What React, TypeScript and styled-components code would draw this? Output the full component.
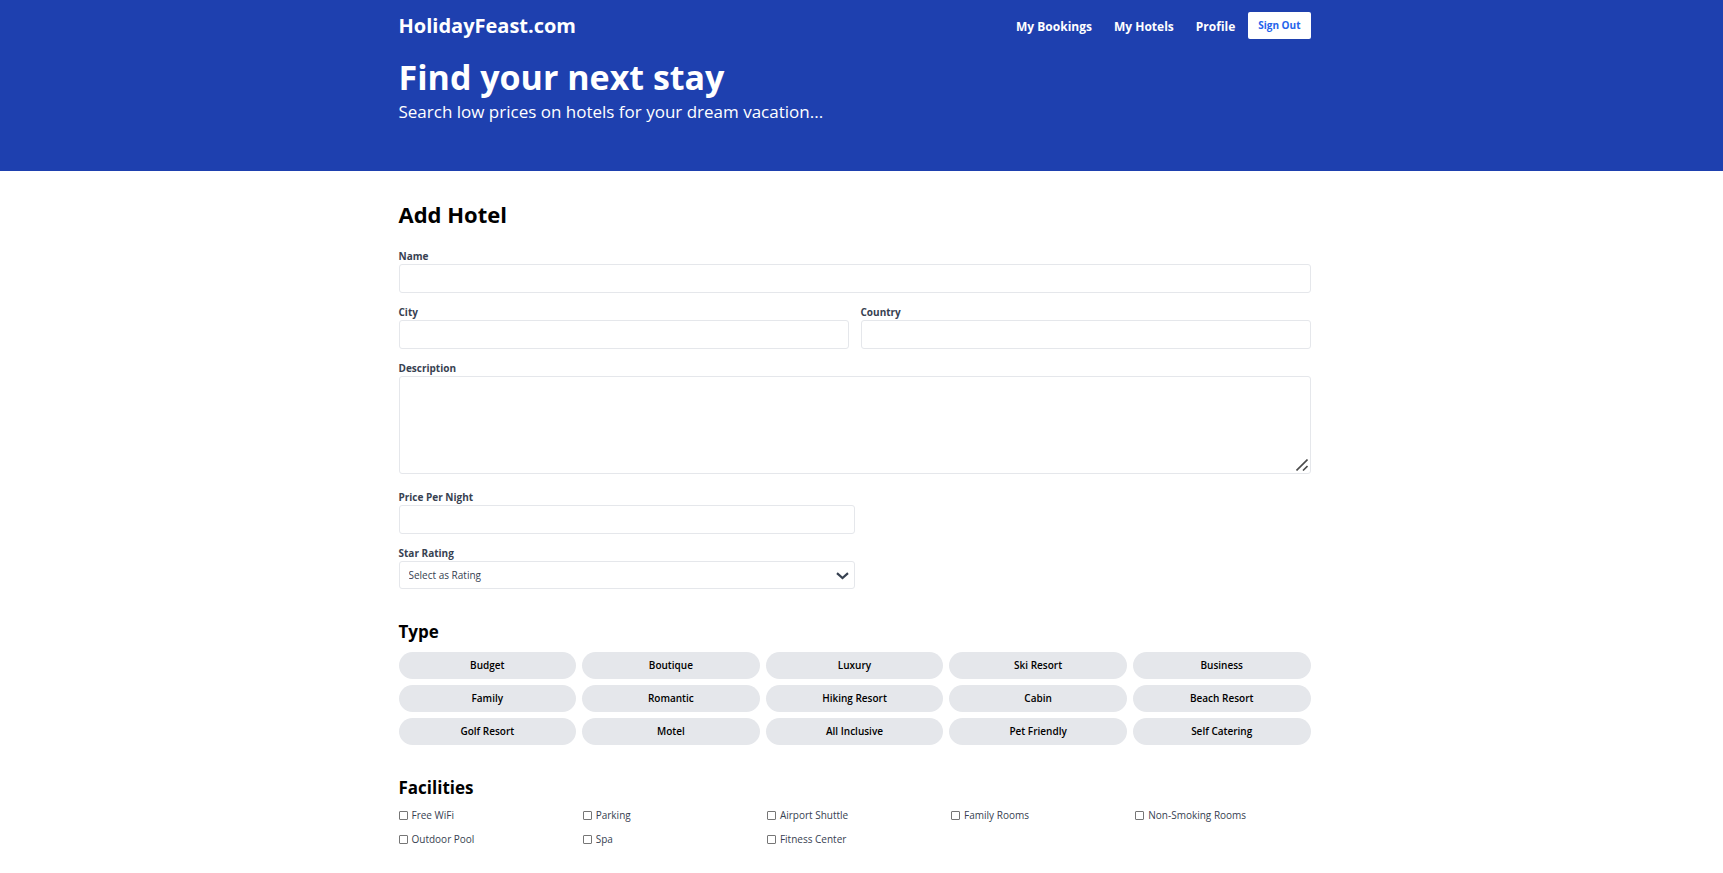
import React from "react";
import styled, { createGlobalStyle, css } from "styled-components";

const GlobalStyle = createGlobalStyle`
  *, *::before, *::after { box-sizing: border-box; }
  body {
    margin: 0;
    background: #fff;
    color: #000;
    font-family: "Segoe UI", "Open Sans", "Noto Sans", sans-serif;
    font-size: 12px;
    line-height: 18px;
  }
  h1, h2, p { margin: 0; }
  button, input, select, textarea { font: inherit; margin: 0; }
`;

const Container = styled.div`
  width: 100%;
  max-width: 936px;
  margin: 0 auto;
  padding: 0 12px;
`;

const Page = styled.div`
  min-height: 100vh;
`;

const Band = styled.header`
  background: #1e40af;
  color: #fff;
  padding: 12px 14px 46px 0;
`;

const NavBar = styled.div`
  display: flex;
  justify-content: space-between;
  align-items: center;
  height: 27px;
`;

const Logo = styled.a`
  color: #fff;
  font-size: 20px;
  line-height: 27px;
  font-weight: 700;
  text-decoration: none;
`;

const Nav = styled.nav`
  display: flex;
  align-items: center;
`;

const NavLink = styled.a`
  color: #fff;
  padding: 2px 11px 0;
  font-size: 12px;
  font-weight: 700;
  text-decoration: none;
`;

const SignOut = styled.button`
  margin-left: 2px;
  height: 27px;
  padding: 0 10px 2px;
  border: 0;
  border-radius: 2px;
  background: #fff;
  color: #2563eb;
  font-size: 10px;
  font-weight: 700;
  cursor: pointer;
`;

const HeroTitle = styled.h1`
  margin-top: 20px;
  font-size: 34px;
  line-height: 36px;
  font-weight: 700;
`;

const HeroText = styled.p`
  margin-top: 4px;
  font-size: 17px;
  line-height: 26px;
`;

const Main = styled.main`
  padding: 30px 14px 30px 0;
`;

const Form = styled.form`
  display: flex;
  flex-direction: column;
  gap: 31px;
`;

const Fields = styled.div`
  display: flex;
  flex-direction: column;
  gap: 12px;
`;

const FormTitle = styled.h1`
  margin-bottom: 9px;
  font-size: 22px;
  line-height: 27px;
  font-weight: 700;
`;

const FieldRow = styled.div`
  display: grid;
  grid-template-columns: 1fr 1fr;
  gap: 12px;
`;

const Field = styled.div<{ $half?: boolean }>`
  display: flex;
  flex-direction: column;
  width: ${(p) => (p.$half ? "50%" : "100%")};
`;

const Label = styled.label`
  color: #374151;
  font-size: 10px;
  line-height: 15px;
  font-weight: 700;
`;

const control = css`
  width: 100%;
  border: 1px solid #e5e7eb;
  border-radius: 3px;
  background: #fff;
  color: #374151;
`;

const TextInput = styled.input`
  ${control}
  height: 29px;
  padding: 3px 6px;
`;

const AreaWrap = styled.div`
  position: relative;
  margin-bottom: 4px;
`;

const TextArea = styled.textarea`
  ${control}
  display: block;
  height: 98px;
  padding: 3px 6px;
  resize: vertical;

  &::-webkit-resizer { background: transparent; }
`;

const Grip = styled.svg`
  position: absolute;
  right: 3px;
  bottom: 3px;
  width: 12px;
  height: 12px;
  pointer-events: none;
`;

const SelectWrap = styled.div`
  position: relative;
`;

const Select = styled.select`
  ${control}
  display: block;
  appearance: none;
  height: 28px;
  padding: 0 24px 0 9px;
  font-size: 10px;
`;

const Chevron = styled.svg`
  position: absolute;
  top: 11px;
  right: 6px;
  width: 13px;
  height: 8px;
  pointer-events: none;
`;

const SectionTitle = styled.h2`
  font-size: 17px;
  line-height: 24px;
  font-weight: 700;
`;

const TypeGrid = styled.div`
  display: grid;
  grid-template-columns: repeat(5, 1fr);
  gap: 6px;
  margin-top: 8px;
`;

const TypePill = styled.label`
  position: relative;
  display: flex;
  justify-content: center;
  align-items: center;
  height: 27px;
  padding-bottom: 2px;
  border-radius: 14px;
  background: #e5e7eb;
  font-size: 10px;
  font-weight: 600;
  cursor: pointer;

  &:has(input:checked) { background: #93c5fd; }
`;

const HiddenRadio = styled.input`
  appearance: none;
  position: absolute;
  opacity: 0;
`;

const FacilityGrid = styled.div`
  display: grid;
  grid-template-columns: repeat(5, 1fr);
  gap: 6px 9px;
  margin-top: 6px;
`;

const Facility = styled.label`
  display: flex;
  align-items: center;
  gap: 4px;
  color: #374151;
  font-size: 10px;
`;

const CheckBox = styled.input`
  appearance: none;
  width: 9px;
  height: 9px;
  border: 1px solid #767676;
  border-radius: 1px;
  background: #fff;

  &:checked { background: #2563eb; border-color: #2563eb; }
`;

const types = [
  "Budget", "Boutique", "Luxury", "Ski Resort", "Business",
  "Family", "Romantic", "Hiking Resort", "Cabin", "Beach Resort",
  "Golf Resort", "Motel", "All Inclusive", "Pet Friendly", "Self Catering",
];

const facilities = [
  "Free WiFi", "Parking", "Airport Shuttle", "Family Rooms",
  "Non-Smoking Rooms", "Outdoor Pool", "Spa", "Fitness Center",
];

function TextField({ id, label, half, type = "text" }: { id: string; label: string; half?: boolean; type?: string }) {
  return (
    <Field $half={half}>
      <Label htmlFor={id}>{label}</Label>
      <TextInput id={id} name={id} type={type} />
    </Field>
  );
}

export default function App() {
  return (
    <Page>
      <GlobalStyle />
      <Band>
        <Container>
          <NavBar>
            <Logo href="#">HolidayFeast.com</Logo>
            <Nav>
              <NavLink href="#bookings">My Bookings</NavLink>
              <NavLink href="#hotels">My Hotels</NavLink>
              <NavLink href="#profile">Profile</NavLink>
              <SignOut type="button">Sign Out</SignOut>
            </Nav>
          </NavBar>
          <HeroTitle>Find your next stay</HeroTitle>
          <HeroText>Search low prices on hotels for your dream vacation...</HeroText>
        </Container>
      </Band>
      <Main>
        <Container>
          <Form onSubmit={(e) => e.preventDefault()}>
            <Fields>
              <FormTitle>Add Hotel</FormTitle>
              <TextField id="name" label="Name" />
              <FieldRow>
                <TextField id="city" label="City" />
                <TextField id="country" label="Country" />
              </FieldRow>
              <Field>
                <Label htmlFor="description">Description</Label>
                <AreaWrap>
                  <TextArea id="description" name="description" />
                  <Grip viewBox="0 0 12 12" aria-hidden="true">
                    <path d="M0.5 11.5 11.5 0.5M7 11.5 11.5 7" fill="none" stroke="#4b4b4b" strokeWidth="1.6" />
                  </Grip>
                </AreaWrap>
              </Field>
              <TextField id="price" label="Price Per Night" type="number" half />
              <Field $half>
                <Label htmlFor="rating">Star Rating</Label>
                <SelectWrap>
                  <Select id="rating" name="rating" defaultValue="">
                    <option value="">Select as Rating</option>
                    {[1, 2, 3, 4, 5].map((n) => (
                      <option key={n} value={n}>{n}</option>
                    ))}
                  </Select>
                  <Chevron viewBox="0 0 13 8" aria-hidden="true">
                    <path d="M1 1.2 6.5 6 12 1.2" fill="none" stroke="#374151" strokeWidth="2.2" />
                  </Chevron>
                </SelectWrap>
              </Field>
            </Fields>
            <section>
              <SectionTitle>Type</SectionTitle>
              <TypeGrid>
                {types.map((t) => (
                  <TypePill key={t}>
                    <HiddenRadio type="radio" name="type" value={t} />
                    {t}
                  </TypePill>
                ))}
              </TypeGrid>
            </section>
            <section>
              <SectionTitle>Facilities</SectionTitle>
              <FacilityGrid>
                {facilities.map((f) => (
                  <Facility key={f}>
                    <CheckBox type="checkbox" name="facilities" value={f} />
                    {f}
                  </Facility>
                ))}
              </FacilityGrid>
            </section>
          </Form>
        </Container>
      </Main>
    </Page>
  );
}
